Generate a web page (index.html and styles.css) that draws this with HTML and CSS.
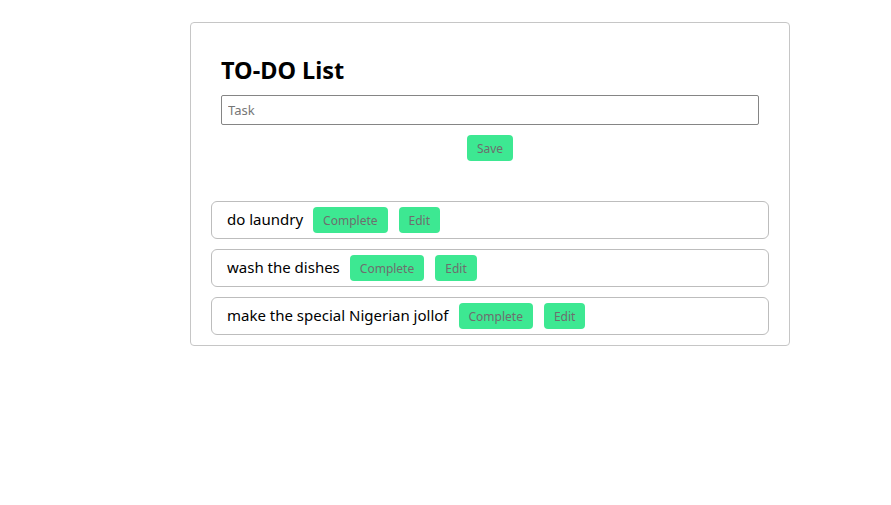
FILE: index.html
```html
<!DOCTYPE html>
<html>
<head>
<meta charset="utf-8">
<link rel="stylesheet" href="styles.css">
</head>
<body>
<div class="page">
  <div class="card">
    <div class="form">
      <h1 class="title">TO-DO List</h1>
      <input class="task-input" type="text" placeholder="Task">
      <div class="save-row"><button class="btn">Save</button></div>
    </div>
    <ul class="list">
      <li class="item"><span class="item-text">do laundry</span><button class="btn">Complete</button><button class="btn">Edit</button></li>
      <li class="item"><span class="item-text">wash the dishes</span><button class="btn">Complete</button><button class="btn">Edit</button></li>
      <li class="item"><span class="item-text">make the special Nigerian jollof</span><button class="btn">Complete</button><button class="btn">Edit</button></li>
    </ul>
  </div>
</div>
</body>
</html>
```

FILE: styles.css
```css
* { box-sizing: border-box; }
body {
  margin: 0;
  font-family: "Noto Sans", "Open Sans", sans-serif;
  color: #000;
  background: #fff;
}
.page {
  padding: 22px 0 0 190px;
}
.card {
  width: 600px;
  border: 1px solid #c6c6c6;
  border-radius: 4px;
  padding: 28px 20px 10px 20px;
}
.form {
  padding: 0 10px;
}
.title {
  margin: 0;
  font-size: 23.5px;
  font-weight: 700;
  line-height: 38px;
}
.task-input {
  display: block;
  width: 100%;
  height: 30px;
  margin-top: 6px;
  border: 1px solid #858585;
  border-radius: 2px;
  padding: 0 6px;
  font-family: inherit;
  font-size: 13px;
  outline: none;
}
.task-input::placeholder { color: #767676; }
.save-row {
  display: flex;
  justify-content: center;
  margin-top: 10px;
}
.btn {
  height: 26px;
  padding: 0 10px;
  border: none;
  border-radius: 4px;
  background: #3de892;
  color: #6e6e6e;
  font-family: inherit;
  font-size: 12px;
  cursor: pointer;
}
.list {
  list-style: none;
  margin: 40px 0 0 0;
  padding: 0;
  display: flex;
  flex-direction: column;
  gap: 10px;
}
.item {
  display: flex;
  align-items: center;
  gap: 10px;
  height: 38px;
  padding: 0 15px;
  border: 1px solid #bdbdbd;
  border-radius: 6px;
  font-size: 15px;
  line-height: 20px;
}
.item-text { margin-top: -2px; }
.item .btn + .btn { margin-left: 1px; }
```
